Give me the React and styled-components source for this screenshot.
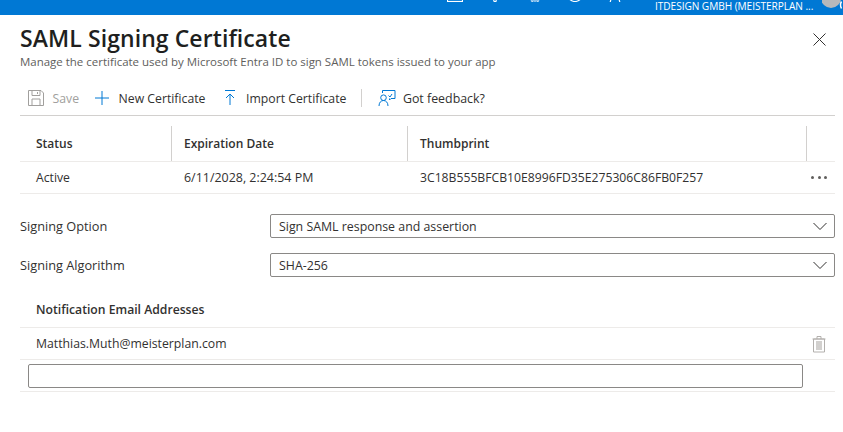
import styled, { createGlobalStyle } from "styled-components";

const GlobalStyle = createGlobalStyle`
  html, body {
    margin: 0;
    background: #fff;
    font-family: "Open Sans", "Noto Sans", sans-serif;
    color: #323130;
  }
`;

const columns = "152px 236px 399px 1fr";

const Page = styled.div`
  width: 843px;
  height: 432px;
  overflow: hidden;
`;

const TopBar = styled.div`
  display: flex;
  align-items: flex-start;
  height: 15px;
  padding-left: 447px;
  background: #0078d4;
  overflow: hidden;
  color: #fff;
`;

const TopIcons = styled.div`
  display: flex;
  gap: 24px;
  width: 208px;
`;

const TopIcon = styled.svg`
  flex: none;
  width: 16px;
  height: 16px;
  margin-top: -14px;
  fill: none;
  stroke: #fff;
  stroke-width: 1.2;
`;

const Tenant = styled.div`
  width: 167px;
  font-size: 10.15px;
  line-height: 12px;
  letter-spacing: -0.06px;
  white-space: nowrap;
`;

const Avatar = styled.svg`
  flex: none;
  width: 21px;
  height: 15px;
`;

const Content = styled.div`
  padding: 0 8px 0 20px;
`;

const Header = styled.div`
  display: flex;
  justify-content: space-between;
  height: 59px;
  padding-top: 10px;
  box-sizing: border-box;
`;

const Title = styled.h1`
  margin: 0;
  font-size: 23px;
  line-height: 27px;
  font-weight: 600;
  color: #201f1e;
  letter-spacing: 0.08px;
`;

const Subtitle = styled.p`
  margin: 2px 0 0;
  font-size: 11.48px;
  line-height: 15px;
  color: #605e5c;
`;

const CloseButton = styled.svg`
  width: 13px;
  height: 13px;
  margin: 8px 9px 0 0;
  stroke: #323130;
  stroke-width: 1;
  fill: none;
`;

const Toolbar = styled.div`
  display: flex;
  align-items: center;
  height: 42px;
  padding: 7px 0 0 7px;
  border-bottom: 1px solid #d2d0ce;
  box-sizing: border-box;
  font-size: 12.25px;
`;

const ToolButton = styled.div`
  display: flex;
  align-items: center;
  gap: ${(p) => p.$iconGap || 7.5}px;
  margin-right: ${(p) => p.$gap}px;
  font-size: ${(p) => p.$size || 12.25}px;
  color: ${(p) => (p.$disabled ? "#a19f9d" : "#323130")};
  white-space: nowrap;
`;

const ToolIcon = styled.svg`
  flex: none;
  width: 18px;
  height: 18px;
  fill: none;
  stroke: ${(p) => p.$color};
  stroke-width: 1;
`;

const ToolDivider = styled.div`
  width: 1px;
  height: 18px;
  background: #d2d0ce;
  margin-right: 16px;
`;

const TableRow = styled.div`
  display: grid;
  grid-template-columns: ${columns};
  align-items: center;
  height: ${(p) => p.$height}px;
  padding-top: ${(p) => p.$top || 0}px;
  border-bottom: 1px solid #edebe9;
  font-size: 12.2px;
  box-sizing: border-box;
`;

const HeadCell = styled.div`
  display: flex;
  align-items: center;
  height: 100%;
  box-sizing: border-box;
  padding-left: ${(p) => p.$pad}px;
  font-size: 12px;
  font-weight: 600;
  color: #323130;
  border-right: ${(p) => (p.$last ? "none" : "1px solid #d2d0ce")};
`;

const Cell = styled.div`
  padding-left: ${(p) => p.$pad}px;
  font-size: ${(p) => p.$size || 12.2}px;
  white-space: nowrap;
`;

const More = styled.div`
  display: flex;
  justify-content: flex-end;
  gap: 3.5px;
  padding-right: 8px;
`;

const Dot = styled.span`
  width: 3px;
  height: 3px;
  border-radius: 50%;
  background: #605e5c;
`;

const FormRow = styled.div`
  display: grid;
  grid-template-columns: 250px 1fr;
  align-items: center;
  margin-top: ${(p) => p.$top}px;
`;

const FormLabel = styled.div`
  font-size: 12.75px;
`;

const Select = styled.div`
  display: flex;
  align-items: center;
  justify-content: space-between;
  height: 24px;
  padding: 0 6px 0 8px;
  border: 1px solid #8a8886;
  border-radius: 2px;
  box-sizing: border-box;
  font-size: 12.37px;
`;

const Chevron = styled.svg`
  width: 16px;
  height: 16px;
  fill: none;
  stroke: #323130;
  stroke-width: 1;
`;

const EmailHead = styled.div`
  display: flex;
  align-items: center;
  height: 37px;
  margin-top: 14px;
  padding-left: 16px;
  border-bottom: 1px solid #edebe9;
  box-sizing: border-box;
  font-size: 12.2px;
  font-weight: 600;
`;

const EmailRow = styled.div`
  display: flex;
  align-items: center;
  justify-content: space-between;
  height: 32px;
  padding: 0 8px 0 16px;
  border-bottom: 1px solid #edebe9;
  box-sizing: border-box;
  font-size: 12.25px;
`;

const Trash = styled.svg`
  width: 16px;
  height: 18px;
  fill: none;
  stroke: #b3b0ad;
  stroke-width: 1;
`;

const InputRow = styled.div`
  display: flex;
  height: 32px;
  padding: 4px 0 0 8px;
  border-bottom: 1px solid #edebe9;
  box-sizing: border-box;
`;

const EmailInput = styled.input`
  width: 775px;
  height: 24px;
  padding: 0;
  box-sizing: border-box;
  border: 1px solid #8a8886;
  border-radius: 2px;
  outline: none;
`;

const chevron = "M1.5 5L8 11.500 14.500 5";

export default function App() {
  return (
    <Page>
      <GlobalStyle />
      <TopBar>
        <TopIcons>
          <TopIcon viewBox="0 0 16 16"><rect x="0.5" y="1" width="15" height="14.500" /></TopIcon>
          <TopIcon viewBox="0 0 16 16"><circle cx="8" cy="14.500" r="1.200" /></TopIcon>
          <TopIcon viewBox="0 0 16 16"><path d="M4 14.500q1 1.500 2.500 0M7 15h2M9.500 14.500q1.500 1.500 2.500 0" /></TopIcon>
          <TopIcon viewBox="0 0 16 16"><circle cx="8" cy="8" r="7.500" /></TopIcon>
          <TopIcon viewBox="0 0 16 16"><path d="M3 17l1-4M13 17l-1-4" /></TopIcon>
        </TopIcons>
        <Tenant>ITDESIGN GMBH (MEISTERPLAN ...</Tenant>
        <Avatar viewBox="0 0 21 15">
          <circle cx="9" cy="-2" r="10" fill="#b6b8bb" />
          <path d="M19.500 1.500q-2 3 0 7" fill="none" stroke="#fff" strokeWidth="1.500" />
        </Avatar>
      </TopBar>
      <Content>
        <Header>
          <div>
            <Title>SAML Signing Certificate</Title>
            <Subtitle>Manage the certificate used by Microsoft Entra ID to sign SAML tokens issued to your app</Subtitle>
          </div>
          <CloseButton viewBox="0 0 13 13"><path d="M.5.5l12 12M12.500.5l-12 12" /></CloseButton>
        </Header>
        <Toolbar>
          <ToolButton $disabled $gap={14}>
            <ToolIcon $color="#a19f9d" viewBox="0 0 18 18">
              <path d="M1.500 1.500h12.500l2.500 2.500v12.500h-15zM5 1.500v5h8v-5M5 16.500v-6.500h8v6.500M10.500 3v2" />
            </ToolIcon>
            Save
          </ToolButton>
          <ToolButton $gap={15}>
            <ToolIcon $color="#0078d4" viewBox="0 0 18 18"><path d="M9 2v14M2 9h14" /></ToolIcon>
            New Certificate
          </ToolButton>
          <ToolButton $gap={15}>
            <ToolIcon $color="#0078d4" viewBox="0 0 18 18"><path d="M4 1.500h10M9 16V5M5 9l4-4 4 4" /></ToolIcon>
            Import Certificate
          </ToolButton>
          <ToolDivider />
          <ToolButton $gap={0} $iconGap={6.5} $size={12.4}>
            <ToolIcon $color="#0078d4" viewBox="0 0 18 18">
              <path d="M4.500 4V1.500h12.500V9.500h-4l-1.500 1.500v-1.500M1 17c0-3.500 2-5.500 4.500-5.500S10 13.500 10 17M5.500 11.500a2.800 2.800 0 1 0 0-5.600 2.800 2.800 0 0 0 0 5.600zM10.500 6.500l1.500 1.500 2-3" />
            </ToolIcon>
            Got feedback?
          </ToolButton>
        </Toolbar>
        <TableRow $height={46} $top={10}>
          <HeadCell $pad={16}>Status</HeadCell>
          <HeadCell $pad={12}>Expiration Date</HeadCell>
          <HeadCell $pad={12}>Thumbprint</HeadCell>
          <HeadCell $last />
        </TableRow>
        <TableRow $height={32}>
          <Cell $pad={16}>Active</Cell>
          <Cell $pad={12} $size={12.45}>6/11/2028, 2:24:54 PM</Cell>
          <Cell $pad={12}>3C18B555BFCB10E8996FD35E275306C86FB0F257</Cell>
          <More><Dot /><Dot /><Dot /></More>
        </TableRow>
        <FormRow $top={20}>
          <FormLabel>Signing Option</FormLabel>
          <Select>
            Sign SAML response and assertion
            <Chevron viewBox="0 0 16 16"><path d={chevron} /></Chevron>
          </Select>
        </FormRow>
        <FormRow $top={15}>
          <FormLabel>Signing Algorithm</FormLabel>
          <Select>
            SHA-256
            <Chevron viewBox="0 0 16 16"><path d={chevron} /></Chevron>
          </Select>
        </FormRow>
        <EmailHead>Notification Email Addresses</EmailHead>
        <EmailRow>
          Matthias.Muth@meisterplan.com
          <Trash viewBox="0 0 16 18">
            <path d="M2.500 4h11v13h-11zM1.500 4h13M6 4V1.500h4V4" />
            <rect x="5" y="6" width="6" height="9" fill="#d2d0ce" stroke="none" />
          </Trash>
        </EmailRow>
        <InputRow><EmailInput /></InputRow>
      </Content>
    </Page>
  );
}
